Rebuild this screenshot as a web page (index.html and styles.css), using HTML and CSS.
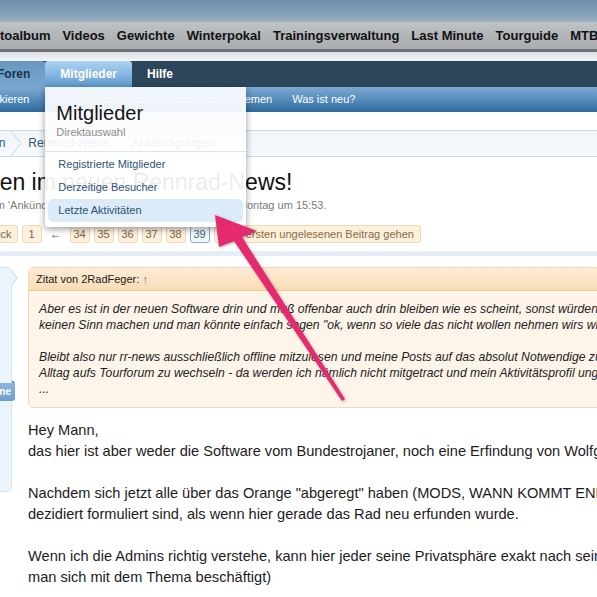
FILE: index.html
```html
<!DOCTYPE html>
<html lang="de">
<head>
<meta charset="utf-8">
<title>Rennrad-News</title>
<link rel="stylesheet" href="styles.css">
</head>
<body>
<header class="masthead"></header>
<nav class="sitebar">
  <a class="site-link first">Fotoalbum</a>
  <a class="site-link">Videos</a>
  <a class="site-link">Gewichte</a>
  <a class="site-link">Winterpokal</a>
  <a class="site-link">Trainingsverwaltung</a>
  <a class="site-link">Last Minute</a>
  <a class="site-link">Tourguide</a>
  <a class="site-link">MTB-News</a>
</nav>
<div class="sitebar-edge"></div>
<div class="page-top"></div>
<nav class="tabs">
  <a class="tab tab-current">Foren</a>
  <div class="tab tab-open">Mitglieder
    <div class="dropdown">
      <div class="dd-head">
        <div class="dd-title">Mitglieder</div>
        <div class="dd-sub">Direktauswahl</div>
      </div>
      <ul class="dd-list">
        <li class="dd-item">Registrierte Mitglieder</li>
        <li class="dd-item">Derzeitige Besucher</li>
        <li class="dd-item dd-hover">Letzte Aktivitäten</li>
      </ul>
    </div>
  </div>
  <a class="tab">Hilfe</a>
</nav>
<nav class="subnav">
  <a class="sub-link first">Foren als gelesen markieren</a>
  <a class="sub-link">Forum durchsuchen</a>
  <a class="sub-link">Beobachtete Themen</a>
  <a class="sub-link">Was ist neu?</a>
</nav>
<main class="content">
  <div class="crumbs">
    <span class="crumb first">Foren</span>
    <svg class="chev" width="10" height="25" viewBox="0 0 10 25"><polyline points="0,0 10,12.5 0,25" fill="none" stroke="#c3d3e0" stroke-width="1"/></svg>
    <span class="crumb">Rennrad-News</span>
    <svg class="chev" width="10" height="25" viewBox="0 0 10 25"><polyline points="0,0 10,12.5 0,25" fill="none" stroke="#c3d3e0" stroke-width="1"/></svg>
    <span class="crumb">Ankündigungen</span>
  </div>
  <h1 class="title">Willkommen im neuen Rennrad-News!</h1>
  <p class="meta">Thema im 'Ankündigungen' gestartet von Rennrad-News, Montag um 15:53.</p>
  <div class="pagenav">
    <a class="pn pn-text pn-prev">Zurück</a>
    <a class="pn">1</a>
    <span class="pn-skip">←</span>
    <a class="pn">34</a>
    <a class="pn">35</a>
    <a class="pn">36</a>
    <a class="pn">37</a>
    <a class="pn">38</a>
    <a class="pn pn-current">39</a>
    <a class="pn pn-text pn-unread">Zum ersten ungelesenen Beitrag gehen</a>
  </div>
  <div class="divider"></div>
  <article class="message">
    <aside class="userinfo">
      <span class="notch"></span>
      <span class="badge">Online</span>
    </aside>
    <div class="msg-body">
      <blockquote class="quote">
        <div class="quote-head">Zitat von 2RadFeger: <span class="quote-up">↑</span></div>
        <div class="quote-text">Aber es ist in der neuen Software drin und muß offenbar auch drin bleiben wie es scheint, sonst würden die<br>keinen Sinn machen und man könnte einfach sagen "ok, wenn so viele das nicht wollen nehmen wirs wieder raus"<br><br>Bleibt also nur rr-news ausschließlich offline mitzulesen und meine Posts auf das absolut Notwendige zu beschränken<br>Alltag aufs Tourforum zu wechseln - da werden ich nämlich nicht mitgetract und mein Aktivitätsprofil ungenau<br>...</div>
      </blockquote>
      <p class="post-text">Hey Mann,<br>das hier ist aber weder die Software vom Bundestrojaner, noch eine Erfindung von Wolfgang Schäuble.<br><br>Nachdem sich jetzt alle über das Orange "abgeregt" haben (MODS, WANN KOMMT ENDLICH DIE FARBE?)<br>dezidiert formuliert sind, als wenn hier gerade das Rad neu erfunden wurde.<br><br>Wenn ich die Admins richtig verstehe, kann hier jeder seine Privatsphäre exakt nach seinen Wünschen<br>man sich mit dem Thema beschäftigt)</p>
    </div>
  </article>
</main>
<svg class="pointer-arrow" width="597" height="597" viewBox="0 0 597 597">
  <polygon points="215,215 257,231 242,237 345,399 342,401 234,241 219,247" fill="#e62a70"/>
</svg>
</body>
</html>
```
FILE: styles.css
```css
* { box-sizing: border-box; }
html, body { margin: 0; padding: 0; }
body {
  width: 597px;
  height: 597px;
  overflow: hidden;
  position: relative;
  background: #fff;
  font-family: "Liberation Sans", Arial, Helvetica, sans-serif;
  color: #1a1a1a;
}
a { text-decoration: none; color: inherit; }

.masthead {
  height: 22px;
  background: linear-gradient(180deg, #6f8fab 0%, #86a0b7 60%, #9cb1c3 100%);
}
.sitebar {
  height: 27px;
  display: flex;
  gap: 12px;
  white-space: nowrap;
  background: linear-gradient(180deg, #c0c3c6 0%, #b2b6b9 50%, #a9adb1 100%);
  font-size: 13px;
  font-weight: bold;
  line-height: 27px;
  color: #121212;
}
.site-link.first { margin-left: -16px; }
.sitebar-edge { height: 3px; background: #6e7276; }
.page-top { height: 9px; background: linear-gradient(180deg, #d9dee2, #f4f6f8); }

.tabs {
  height: 26px;
  display: flex;
  background: #2c475c;
  font-size: 12px;
  font-weight: bold;
  line-height: 26px;
  white-space: nowrap;
}
.tab { padding: 0 15px; color: #fff; position: relative; }
.tab-current {
  margin-left: -18px;
  color: #17344d;
  background: linear-gradient(180deg, #6696c1 0%, #7aa7cf 100%);
  border-radius: 0 3px 0 0;
}
.tab-open {
  background: linear-gradient(180deg, #acd3f1 0%, #86b8e2 50%, #5e98cc 100%);
  border-radius: 3px 3px 0 0;
}

.subnav {
  height: 25px;
  display: flex;
  gap: 20px;
  white-space: nowrap;
  background: linear-gradient(180deg, #7ca9d1 0%, #558cbc 50%, #2f6a9c 100%);
  font-size: 11px;
  line-height: 25px;
  color: #fff;
}
.sub-link.first { margin-left: -110px; }

.dropdown {
  position: absolute;
  left: 0;
  top: 26px;
  width: 201px;
  z-index: 5;
  background: rgba(255, 255, 255, 0.92);
  border-radius: 0 0 4px 4px;
  box-shadow: 0 2px 7px rgba(0, 0, 0, 0.4);
  font-weight: normal;
  white-space: nowrap;
}
.dd-head {
  padding: 14px 11px 12px;
  border-bottom: 1px solid #d9e5ef;
  background: linear-gradient(180deg, rgba(236,243,249,0.6), rgba(255,255,255,0));
}
.dd-title { font-size: 20px; line-height: 24px; color: #141414; }
.dd-sub { font-size: 11px; line-height: 14px; color: #8c8c8c; }
.dd-list { list-style: none; margin: 0; padding: 1px 0 5px; }
.dd-item {
  margin: 0 3px;
  padding: 0 10px;
  height: 23px;
  font-size: 11px;
  line-height: 23px;
  color: #2e5276;
  border-radius: 5px;
}
.dd-hover { background: #dcebf8; }

.content { padding-top: 18px; }
.crumbs {
  height: 27px;
  display: flex;
  align-items: center;
  white-space: nowrap;
  border-top: 1px solid #c9d8e4;
  border-bottom: 1px solid #c9d8e4;
  background: linear-gradient(180deg, #f0f5f9, #f8fbfd);
  font-size: 12px;
  line-height: 25px;
  color: #2e5a80;
}
.crumb.first { margin-left: -26px; }
.chev { flex: none; margin: 0 7px 0 6px; }

.title {
  margin: 11px 0 0 -100px;
  font-size: 23px;
  font-weight: normal;
  line-height: 28px;
  color: #111;
  white-space: nowrap;
}
.meta {
  margin: 2px 0 0 -44px;
  font-size: 11px;
  line-height: 14px;
  color: #7a7a7a;
  white-space: nowrap;
}
.pagenav {
  margin-top: 13px;
  display: flex;
  gap: 4px;
  white-space: nowrap;
  font-size: 11px;
}
.pn {
  width: 20px;
  height: 18px;
  padding: 0;
  border: 1px solid #f1d8b4;
  border-radius: 3px;
  background: #fdf0dd;
  color: #7d6548;
  line-height: 16px;
  text-align: center;
}
.pn-text { width: auto; padding: 0 6px; }
.pn-prev { margin-left: -28px; padding: 0 5px; }
.pn-skip { width: 20px; text-align: center; line-height: 18px; color: #555; font-size: 12px; }
.pn-current { background: #f6f9fc; border-color: #88abc9; color: #3b6283; }
.pn-unread { color: #8a6a40; }

.divider { margin-top: 8px; height: 5px; background: #e5eef6; }

.message { margin-top: 11px; display: flex; align-items: flex-start; }
.userinfo {
  position: relative;
  flex: none;
  width: 12px;
  height: 225px;
  background: #ecf4fb;
  border: 1px solid #d3e3f0;
  border-left: none;
  border-radius: 0 5px 5px 0;
}
.notch {
  position: absolute;
  right: -7px;
  top: 2px;
  width: 0;
  height: 0;
  border-top: 8px solid transparent;
  border-bottom: 8px solid transparent;
  border-left: 6px solid #d3e3f0;
}
.notch::after {
  content: "";
  position: absolute;
  left: -7px;
  top: -7px;
  border-top: 7px solid transparent;
  border-bottom: 7px solid transparent;
  border-left: 5px solid #ecf4fb;
}
.badge {
  position: absolute;
  right: -4px;
  top: 115px;
  height: 18px;
  padding: 0 4px 0 0;
  background: linear-gradient(180deg, #8db5da, #6e9fcf);
  border-radius: 0 0 3px 0;
  color: #fff;
  font-size: 10px;
  font-weight: bold;
  line-height: 18px;
  white-space: nowrap;
  direction: rtl;
}
.badge::after {
  content: "";
  position: absolute;
  right: 0;
  top: -3px;
  border-left: 3px solid #5a87b3;
  border-top: 3px solid transparent;
}

.msg-body { flex: none; width: 760px; margin-left: 16px; }
.quote {
  margin: 0;
  border: 1px solid #f2d8b8;
  border-radius: 5px;
  background: #fef5ea;
}
.quote-head {
  height: 23px;
  padding-left: 7px;
  border-bottom: 1px solid #f0cb9a;
  border-radius: 5px 5px 0 0;
  background: linear-gradient(180deg, #fdecd6, #f9dcb6);
  font-size: 11px;
  line-height: 22px;
  color: #1a1a1a;
}
.quote-up { color: #5b7a98; }
.quote-text {
  padding: 10px 10px;
  font-size: 12.2px;
  font-style: italic;
  line-height: 16px;
  color: #222;
  white-space: nowrap;
}
.post-text {
  margin: 12px 0 0;
  font-size: 14.6px;
  line-height: 21px;
  color: #1c1c1c;
  white-space: nowrap;
}

.pointer-arrow {
  position: absolute;
  left: 0;
  top: 0;
  z-index: 10;
  pointer-events: none;
  filter: drop-shadow(1px 1px 1.5px rgba(0, 0, 0, 0.3));
}
```
